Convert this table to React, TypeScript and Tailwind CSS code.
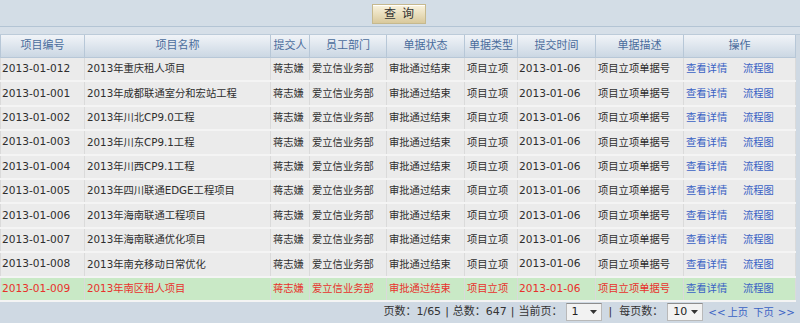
import React from 'react';

interface Row {
  code: string;
  name: string;
  highlight?: boolean;
}

const rows: Row[] = [
  { code: '2013-01-012', name: '2013年重庆租人项目' },
  { code: '2013-01-001', name: '2013年成都联通室分和宏站工程' },
  { code: '2013-01-002', name: '2013年川北CP9.0工程' },
  { code: '2013-01-003', name: '2013年川东CP9.1工程' },
  { code: '2013-01-004', name: '2013年川西CP9.1工程' },
  { code: '2013-01-005', name: '2013年四川联通EDGE工程项目' },
  { code: '2013-01-006', name: '2013年海南联通工程项目' },
  { code: '2013-01-007', name: '2013年海南联通优化项目' },
  { code: '2013-01-008', name: '2013年南充移动日常优化' },
  { code: '2013-01-009', name: '2013年南区租人项目', highlight: true },
];

const headers = ['项目编号', '项目名称', '提交人', '员工部门', '单据状态', '单据类型', '提交时间', '单据描述', '操作'];
const widths = [84, 186, 39, 77, 78, 53, 78, 88, 112];

function Select({ value, width }: { value: string; width: string }) {
  return (
    <div className={`${width} h-[18px] flex items-center justify-between pl-[5px] pr-[4px] bg-[#f2f2f2] border border-[#b9b9b9] border-t-[#8d8d8d] text-[#222] text-[11px]`}>
      <span>{value}</span>
      <svg width="7" height="4" viewBox="0 0 7 4">
        <path d="M0 0 H7 L3.5 4 Z" fill="#333" />
      </svg>
    </div>
  );
}

export default function App() {
  return (
    <div
      className="w-[800px] h-[323px] overflow-hidden bg-[#cfd9e3] flex flex-col text-[10.3px] text-[#333]"
      style={{ fontFamily: '"DejaVu Sans", "Noto Sans CJK SC", sans-serif' }}
    >
      {/* toolbar */}
      <div className="h-[27px] flex justify-center items-center border-b border-[#b3c4d4] bg-[#d3dde6]">
        <button className="ml-[-2px] w-[54px] h-[20px] mt-[2px] border border-[#c6b98e] bg-gradient-to-b from-[#faf4df] to-[#d9c99c] text-[#333] text-[12px] tracking-[6px] pl-[6px] shadow-[inset_0_1px_0_#fff]">
          查询
        </button>
      </div>
      <div className="h-[8px] bg-[#d6dfe8] border-b border-[#bccbd9]" />

      <table className="table-fixed border-collapse w-[796px]">
        <colgroup>
          {widths.map((w, i) => (
            <col key={i} style={{ width: w }} />
          ))}
        </colgroup>
        <thead>
          <tr className="h-[22px] bg-gradient-to-b from-[#f1f4f8] to-[#cbd7e3]">
            {headers.map((h) => (
              <th key={h} className="font-normal text-[11px] text-[#4a6c9c] border-x border-b border-[#b7c7d7] text-center">
                {h}
              </th>
            ))}
          </tr>
        </thead>
        <tbody>
          {rows.map((r) => {
            const bg = r.highlight ? 'bg-[#c9e9c6] text-[#e8312c]' : 'bg-[#ebebeb] text-[#2e2e2e]';
            const cell = 'h-[24.4px] border-x border-[#dadada] border-b-[2px] border-b-[#f4f4f4] px-[2px] whitespace-nowrap overflow-hidden';
            return (
              <tr key={r.code} className={bg}>
                <td className={`${cell} pl-[1px] text-[10.6px]`}>{r.code}</td>
                <td className={cell}>{r.name}</td>
                <td className={cell}>蒋志嫌</td>
                <td className={cell}>爱立信业务部</td>
                <td className={cell}>审批通过结束</td>
                <td className={cell}>项目立项</td>
                <td className={`${cell} pl-[1px] text-[10.6px]`}>2013-01-06</td>
                <td className={cell}>项目立项单据号</td>
                <td className={`${cell} text-[#3a62c4]`}>
                  <div className="flex items-center">
                    <span className="w-[57px]">查看详情</span>
                    <span>流程图</span>
                  </div>
                </td>
              </tr>
            );
          })}
        </tbody>
      </table>

      {/* pagination */}
      <div className="flex-1 flex items-center justify-end pr-[5px] text-[#333] text-[11px] bg-[#cfd9e3]">
        <span>页数：1/65</span>
        <span className="mx-[4px]">|</span>
        <span>总数：647</span>
        <span className="mx-[4px]">|</span>
        <span className="mr-[3px]">当前页：</span>
        <Select value="1" width="w-[36px]" />
        <span className="mx-[7px]">|</span>
        <span className="mr-[4px]">每页数：</span>
        <Select value="10" width="w-[36px]" />
        <span className="ml-[5px] text-[10.3px] text-[#3a62c4]">&lt;&lt;</span>
        <span className="ml-[2px] text-[10.3px] text-[#3a62c4]">上页</span>
        <span className="ml-[5px] text-[10.3px] text-[#3a62c4]">下页</span>
        <span className="ml-[4px] text-[10.3px] text-[#3a62c4]">&gt;&gt;</span>
      </div>
    </div>
  );
}
